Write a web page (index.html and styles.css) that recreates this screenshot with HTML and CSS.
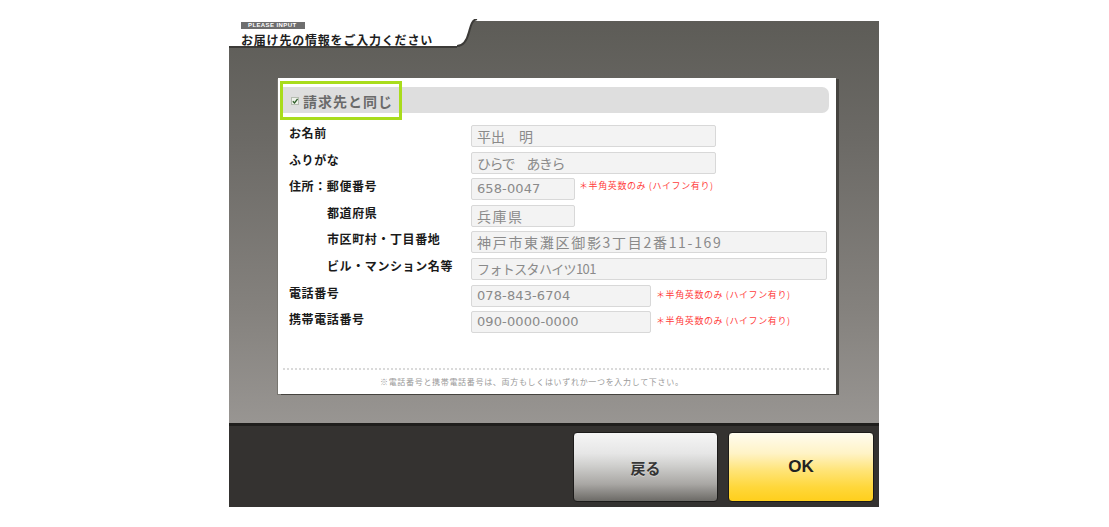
FILE: index.html
```html
<!DOCTYPE html>
<html lang="ja">
<head>
<meta charset="utf-8">
<title>お届け先の情報</title>
<link rel="stylesheet" href="styles.css">
</head>
<body>
<div class="screen">
  <div class="head">
    <div class="tab">
      <div class="tag">PLEASE INPUT</div>
      <div class="title">お届け先の情報をご入力ください</div>
    </div>
    <svg class="curve" width="26" height="29" viewBox="0 0 26 29">
      <path d="M0 0 H20 C15 1 14 6 12 13 C10 21 6 27 0 27 Z" fill="#ffffff"/>
      <path d="M20 0 C15 1 14 6 12 13 C10 21 6 27 0 27" fill="none" stroke="#3c3b38" stroke-width="2"/>
    </svg>
    <div class="head-fill"></div>
  </div>

  <div class="main">
    <div class="card">
      <div class="same-bar">
        <div class="same-sel">
          <svg class="chk" width="8" height="8" viewBox="0 0 8 8">
            <rect x="0.5" y="0.5" width="7" height="7" fill="#eef2ea" stroke="#b5bcb0"/>
            <path d="M1.8 4.3 L3.5 6 L6.6 1.8" fill="none" stroke="#2f5e2a" stroke-width="1.3"/>
          </svg>
          <span>請求先と同じ</span>
        </div>
      </div>

      <div class="form">
        <div class="row">
          <div class="label">お名前</div>
          <div class="field w245">平出　明</div>
        </div>
        <div class="row">
          <div class="label">ふりがな</div>
          <div class="field w245 kana">ひらで　あきら</div>
        </div>
        <div class="row">
          <div class="label">住所：郵便番号</div>
          <div class="field w104 num">658-0047</div>
          <div class="note">＊半角英数のみ (ハイフン有り)</div>
        </div>
        <div class="row">
          <div class="label sub">都道府県</div>
          <div class="field w104 pref">兵庫県</div>
        </div>
        <div class="row">
          <div class="label sub">市区町村・丁目番地</div>
          <div class="field w356 addr">神戸市東灘区御影3丁目2番11-169</div>
        </div>
        <div class="row">
          <div class="label sub">ビル・マンション名等</div>
          <div class="field w356 bldg">フォトスタハイツ101</div>
        </div>
        <div class="row">
          <div class="label">電話番号</div>
          <div class="field w180 num">078-843-6704</div>
          <div class="note mid">＊半角英数のみ (ハイフン有り)</div>
        </div>
        <div class="row">
          <div class="label">携帯電話番号</div>
          <div class="field w180 num">090-0000-0000</div>
          <div class="note mid">＊半角英数のみ (ハイフン有り)</div>
        </div>
      </div>

      <div class="foot">※電話番号と携帯電話番号は、両方もしくはいずれか一つを入力して下さい。</div>
    </div>
  </div>

  <div class="bottom">
    <button class="btn back">戻る</button>
    <button class="btn ok">OK</button>
  </div>
</div>
</body>
</html>
```

FILE: styles.css
```css
* { box-sizing: border-box; }
html, body { margin: 0; padding: 0; background: #ffffff; }
body {
  font-family: "Noto Sans CJK JP", "Noto Sans", sans-serif;
  width: 1109px;
  height: 527px;
  overflow: hidden;
}
.screen {
  margin: 21px 0 0 229px;
  width: 650px;
  height: 486px;
  display: flex;
  flex-direction: column;
  background: linear-gradient(#5d5c57 0%, #6c6a66 25%, #85827e 60%, #9a9794 85%, #9a9794 100%);
}
.head {
  height: 27px;
  display: flex;
  flex: none;
}
.tab {
  width: 228px;
  height: 29px;
  background: #ffffff;
  border-bottom: 2px solid #3c3b38;
  padding: 1px 0 0 12px;
  margin-top: -2px;
  position: relative;
  z-index: 1;
}
.curve {
  display: block;
  margin-top: -2px;
  position: relative;
  z-index: 1;
  flex: none;
}
.head-fill { flex: 1; }
.tag {
  margin-top: 2px;
  width: 64px;
  height: 7px;
  background: #6e6e6e;
  color: #ffffff;
  font-family: "Liberation Sans", sans-serif;
  font-weight: 700;
  font-size: 6px;
  line-height: 7px;
  padding-left: 7px;
  letter-spacing: 0.4px;
}
.title {
  margin-top: 3px;
  font-size: 12px;
  line-height: 15px;
  font-weight: 700;
  color: #1e1e1e;
  letter-spacing: 0.8px;
}
.main {
  flex: 1;
  padding: 30px 43px 0 49px;
}
.card {
  height: 316px;
  background: #ffffff;
  display: flex;
  flex-direction: column;
  padding: 9px 7px 0 5px;
  box-shadow: 3px 1px 0 #45433f, -1px 1px 0 #77756f;
}
.same-bar {
  height: 26px;
  background: #dedede;
  border-radius: 0 7px 7px 0;
  position: relative;
  flex: none;
}
.same-sel {
  position: absolute;
  left: -3px;
  top: -6px;
  width: 122px;
  height: 39px;
  border: 3px solid #a9dc1c;
  display: flex;
  align-items: center;
  padding-left: 8px;
  gap: 4px;
}
.chk { display: block; margin-top: 1px; }
.same-sel span {
  font-size: 14px;
  font-weight: 700;
  color: #6a6a6a;
  letter-spacing: 1px;
}
.form {
  margin-top: 12px;
  padding-left: 6px;
  display: flex;
  flex-direction: column;
  gap: 4.6px;
}
.row {
  display: flex;
  align-items: flex-start;
  height: 22px;
}
.label {
  width: 182px;
  flex: none;
  font-size: 12px;
  font-weight: 700;
  color: #1a1a1a;
  line-height: 14px;
  letter-spacing: 0.6px;
  padding-top: 1px;
  white-space: nowrap;
}
.label.sub { padding-left: 38px; }
.field {
  height: 22px;
  background: #f3f3f3;
  border: 1px solid #d8d8d8;
  border-radius: 2px;
  color: #8a8a8a;
  font-size: 14px;
  line-height: 20px;
  padding-left: 5px;
  white-space: nowrap;
  overflow: hidden;
  flex: none;
}
.field.num { font-family: "DejaVu Sans", sans-serif; font-size: 13px; letter-spacing: 0.1px; }
.field.kana { letter-spacing: -1.5px; }
.field.pref { letter-spacing: 1.5px; }
.field.addr { letter-spacing: 1.7px; }
.field.bldg { font-size: 13px; letter-spacing: -0.6px; }
.w245 { width: 245px; }
.w104 { width: 104px; }
.w356 { width: 356px; }
.w180 { width: 180px; }
.note {
  margin-left: 4px;
  font-size: 9px;
  line-height: 12px;
  color: #ff3d3d;
  padding-top: 2px;
  letter-spacing: 0.6px;
  white-space: nowrap;
}
.note.mid { margin-left: 5px; padding-top: 4px; }
.foot {
  margin-top: auto;
  height: 26px;
  border-top: 2px dotted #dadada;
  text-align: left;
  font-size: 8px;
  line-height: 12px;
  padding: 6px 0 0 97px;
  letter-spacing: 0.68px;
  color: #9a9a9a;
  white-space: nowrap;
}
.bottom {
  height: 84px;
  flex: none;
  background: #343230;
  border-top: 3px solid #1f1e1c;
  display: flex;
  justify-content: flex-end;
  gap: 10px;
  padding: 6px 5px 0 0;
}
.btn {
  width: 146px;
  height: 70px;
  border: 1px solid #1c1b1a;
  border-radius: 4px;
  font-family: "Noto Sans CJK JP", sans-serif;
  font-weight: 700;
  cursor: pointer;
}
.back {
  width: 145px;
  background: linear-gradient(#f5f5f5 0%, #e6e6e6 30%, #cfcfcd 48%, #a9a7a4 75%, #6c6a66 100%);
  color: #353535;
  font-size: 15px;
  text-shadow: 0 1px 0 rgba(255,255,255,0.4);
}
.ok {
  background: linear-gradient(#fffcef 0%, #fff3c6 30%, #ffe477 55%, #ffd73a 80%, #ffcf1c 100%);
  color: #222222;
  font-size: 17px;
  font-family: "Liberation Sans", sans-serif;
}
```
